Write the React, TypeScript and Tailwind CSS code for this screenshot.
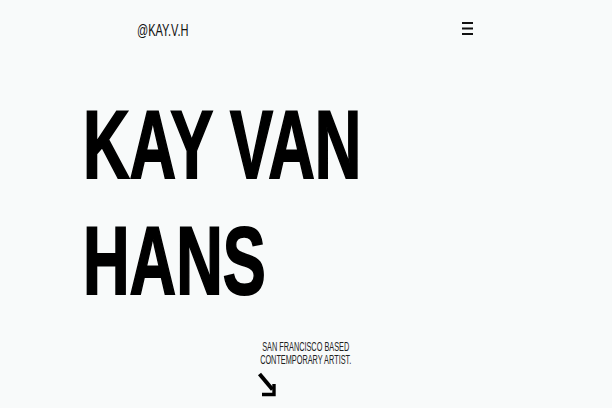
import React from "react";

export default function App() {
  const font = { fontFamily: '"Liberation Sans", Arial, sans-serif' };
  return (
    <div className="w-[612px] h-[408px] bg-[#f8fafa] overflow-hidden text-black" style={font}>
      <header className="flex items-center justify-between pl-[137px] pr-[138px] pt-[21px] h-[40px]">
        <span className="inline-block text-[16px] leading-none scale-x-[0.69] origin-left text-[#111]">@KAY.V.H</span>
        <svg width="12" height="14" viewBox="0 0 12 14" className="-mt-[6px]">
          <rect x="0" y="1" width="11" height="2" fill="#111" />
          <rect x="0" y="6.5" width="11" height="2" fill="#111" />
          <rect x="0" y="12" width="11" height="2" fill="#111" />
        </svg>
      </header>
      <h1 className="pl-[83px] mt-[47px] text-[97px] font-bold leading-[116px] [-webkit-text-stroke:2px_black]">
        <span className="block scale-x-[0.665] origin-left">KAY VAN</span>
        <span className="block scale-x-[0.665] origin-left">HANS</span>
      </h1>
      <div className="flex justify-center mt-[22px]">
        <p className="text-[12px] leading-[13px] text-center scale-x-[0.61] origin-center text-[#222]">
          SAN FRANCISCO BASED
          <br />
          CONTEMPORARY ARTIST.
        </p>
      </div>
      <div className="pl-[257px] mt-[4px]">
        <svg width="22" height="27" viewBox="0 0 22 27">
          <path d="M2.5 3 L15.5 18.5" stroke="#000" strokeWidth="4" fill="none" />
          <path d="M17 13 V23.5 H5" stroke="#000" strokeWidth="3.4" fill="none" />
        </svg>
      </div>
    </div>
  );
}
